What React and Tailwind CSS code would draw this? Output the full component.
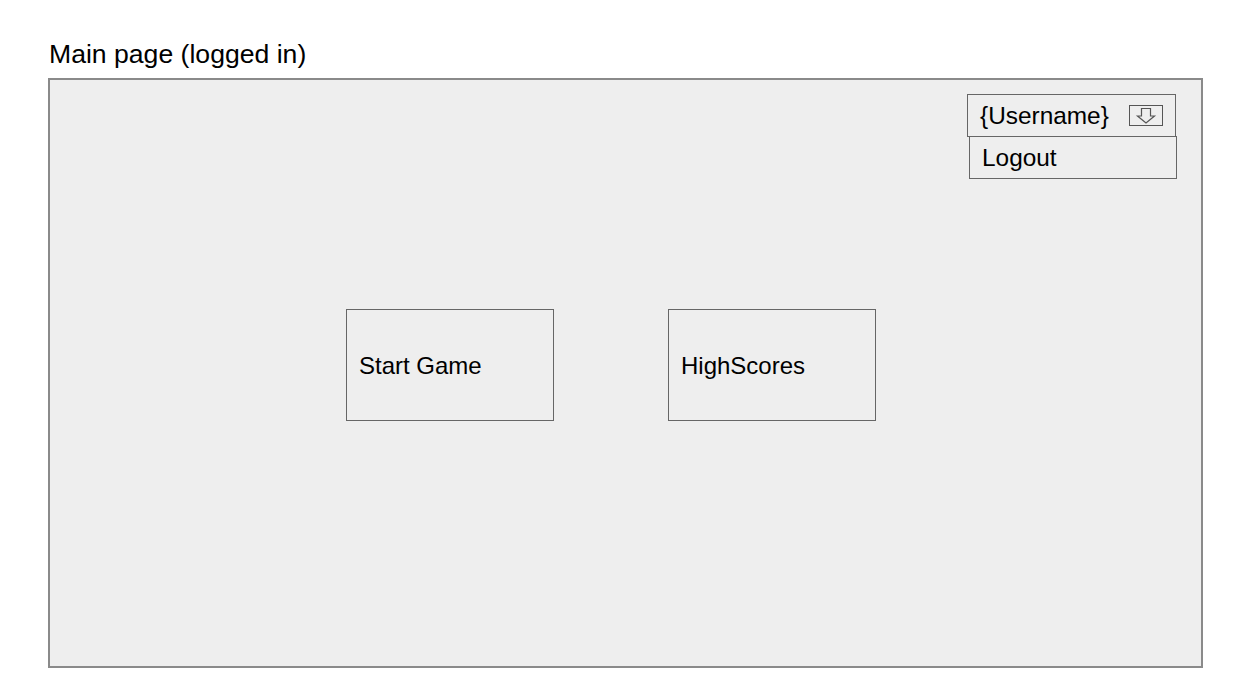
export default function App() {
  const font = { fontFamily: '"Liberation Sans", Arial, sans-serif' };
  return (
    <div className="w-[1237px] h-[693px] bg-white pl-[48px] pt-[41px]" style={font}>
      <div className="ml-px text-[26.6px] leading-[26px] text-black h-[26px]">Main page (logged in)</div>
      <div className="mt-[11px] w-[1155px] h-[590px] border-2 border-[#8a8a8a] bg-[#eeeeee] flex flex-col">
        <div className="flex justify-end pr-[24px] pt-[14px]">
          <div className="flex flex-col items-end">
            <div className="w-[209px] h-[43px] mr-px border border-[#666666] flex items-center justify-between pl-[12px] pr-[12px] text-[24.4px] leading-none text-black">
              <span className="pt-[2px]">{'{Username}'}</span>
              <svg width="34" height="21" viewBox="0 0 34 21" className="block">
                <rect x="0.5" y="0.5" width="33" height="20" fill="none" stroke="#555555" strokeWidth="1" />
                <polygon points="12.5,3.5 21.5,3.5 21.5,11 25.5,11 17,18 8.5,11 12.5,11" fill="none" stroke="#555555" strokeWidth="1.2" strokeLinejoin="miter" />
              </svg>
            </div>
            <div className="w-[208px] h-[43px] -mt-px border border-[#666666] flex items-center pl-[12px] pt-[2px] text-[24.4px] leading-none text-black">
              Logout
            </div>
          </div>
        </div>
        <div className="flex pl-[296px] mt-[130px] gap-[114px]">
          <div className="w-[208px] h-[112px] border border-[#666666] flex items-center pl-[12px] pt-[2px] text-[24px] leading-none text-black">
            Start Game
          </div>
          <div className="w-[208px] h-[112px] border border-[#666666] flex items-center pl-[12px] pt-[2px] text-[24px] leading-none text-black">
            HighScores
          </div>
        </div>
      </div>
    </div>
  );
}
